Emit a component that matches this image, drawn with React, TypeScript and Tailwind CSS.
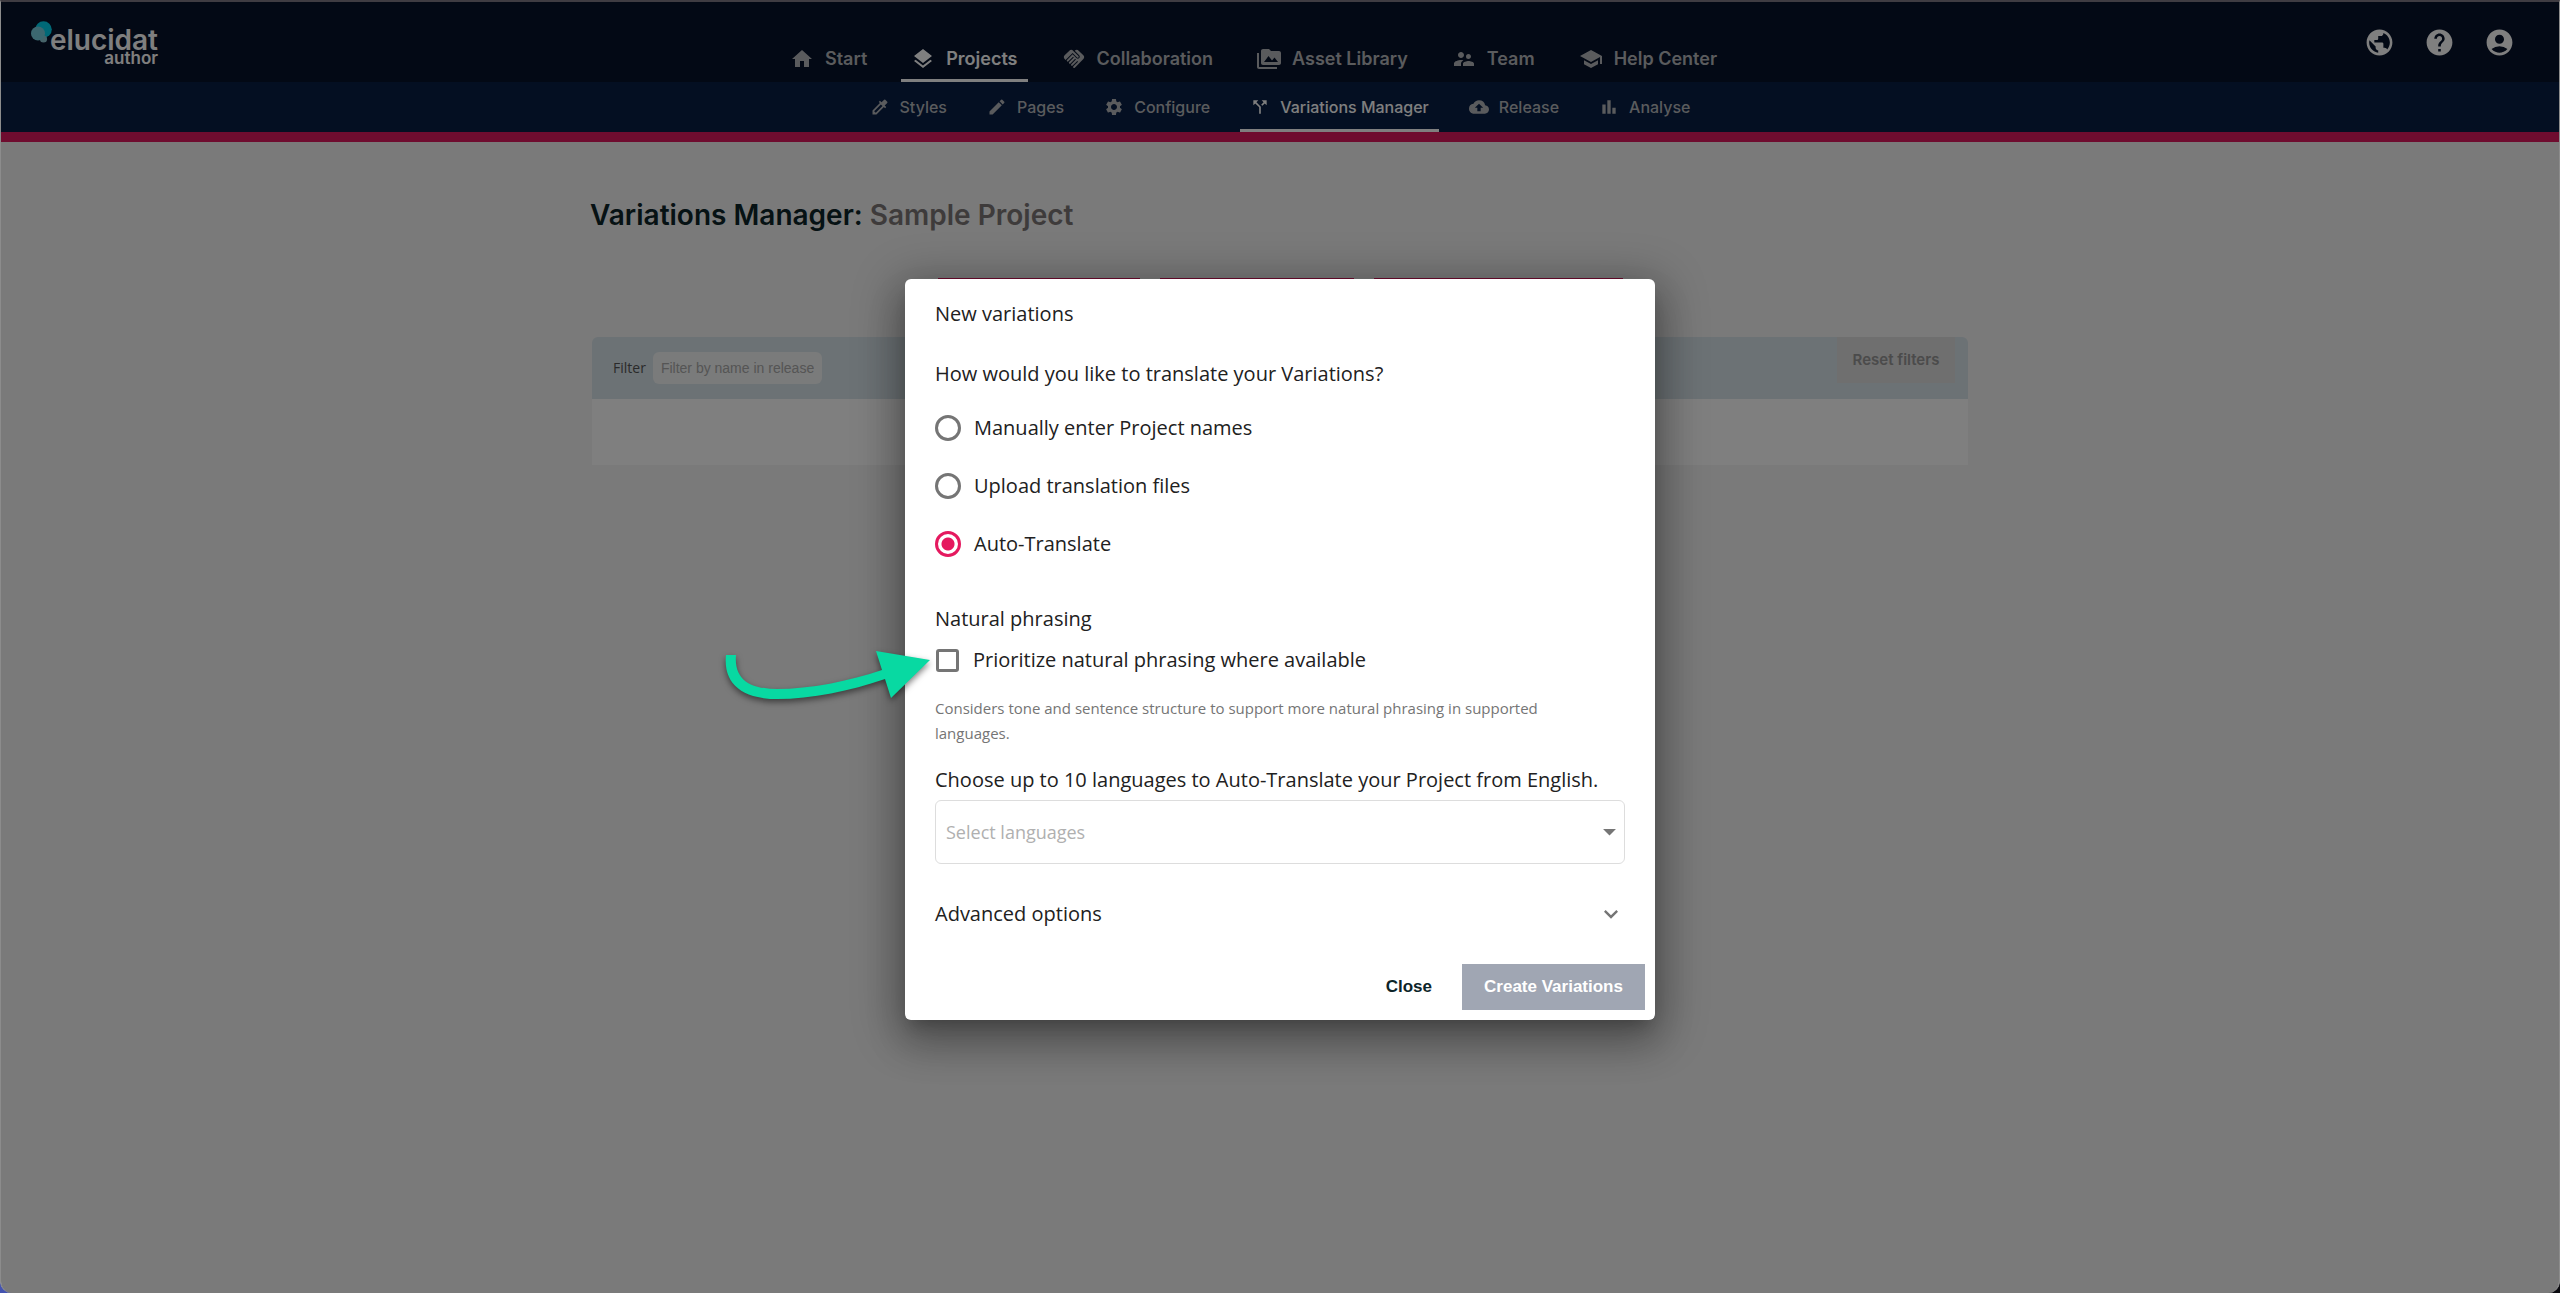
import React from 'react';
import {
    MdAccountCircle,
    MdArrowDropDown,
    MdBackup,
    MdBarChart,
    MdCallSplit,
    MdColorize,
    MdEdit,
    MdExpandMore,
    MdHandshake,
    MdHelp,
    MdHome,
    MdLayers,
    MdPermMedia,
    MdPublic,
    MdSchool,
    MdSettings,
    MdSupervisorAccount,
} from 'react-icons/md';
import type { IconType } from 'react-icons';

type NavItem = { label: string; icon: IconType; active?: boolean };

const mainNav: NavItem[] = [
    { label: 'Start', icon: MdHome },
    { label: 'Projects', icon: MdLayers, active: true },
    { label: 'Collaboration', icon: MdHandshake },
    { label: 'Asset Library', icon: MdPermMedia },
    { label: 'Team', icon: MdSupervisorAccount },
    { label: 'Help Center', icon: MdSchool },
];

const subNav: NavItem[] = [
    { label: 'Styles', icon: MdColorize },
    { label: 'Pages', icon: MdEdit },
    { label: 'Configure', icon: MdSettings },
    { label: 'Variations Manager', icon: MdCallSplit, active: true },
    { label: 'Release', icon: MdBackup },
    { label: 'Analyse', icon: MdBarChart },
];

const userLinks = [
    { label: 'Language', icon: MdPublic },
    { label: 'Help', icon: MdHelp },
    { label: 'Account', icon: MdAccountCircle },
];

const translateOptions = ['Manually enter Project names', 'Upload translation files', 'Auto-Translate'];

const Logo: React.FC = () => (
    <a href="#" className="relative flex w-[127px] flex-col items-end pt-2 font-semibold text-white">
        <svg className="absolute left-0 top-px h-6 w-6" viewBox="0 0 24 24" aria-hidden="true">
            <circle cx="12.5" cy="8.5" r="8.3" fill="#00d2ee" />
            <circle cx="12.5" cy="18" r="3.6" fill="#8cc6d2" />
            <circle cx="7" cy="12.5" r="7" fill="#78d0e0" />
        </svg>
        <span className="text-[28px] leading-6">elucidat</span>
        <span className="text-[17px] leading-[13px]">author</span>
    </a>
);

const Header: React.FC = () => (
    <header>
        <div className="flex h-20 items-center justify-between bg-[#06122a] px-[30px]">
            <Logo />
            <nav className="flex gap-6 self-end">
                {mainNav.map(({ label, icon: Icon, active }) => (
                    <a
                        key={label}
                        href="#"
                        className={`flex h-[43px] items-center gap-[11px] border-b-[3px] px-[10px] text-lg font-semibold ${active ? 'border-white text-white' : 'border-transparent text-[#b5b7bb]'}`}
                    >
                        <Icon className="size-6" />
                        {label}
                    </a>
                ))}
            </nav>
            <div className="flex text-white">
                {userLinks.map(({ label, icon: Icon }) => (
                    <button key={label} type="button" aria-label={label} className="flex w-[60px] justify-center">
                        <Icon className="size-[31px]" />
                    </button>
                ))}
            </div>
        </div>
        <nav className="flex h-[50px] justify-center gap-5 bg-[#081e44]">
            {subNav.map(({ label, icon: Icon, active }) => (
                <a
                    key={label}
                    href="#"
                    className={`flex items-center gap-[10px] border-b-[3px] px-[10px] pt-[2px] text-base font-medium ${active ? 'border-white text-white' : 'border-transparent text-[#b5b7bb]'}`}
                >
                    <Icon className="size-5" />
                    {label}
                </a>
            ))}
        </nav>
        <div className="h-[10px] bg-[#de185e]" />
    </header>
);

const Variations: React.FC = () => (
    <main className="mx-auto w-full max-w-[1380px] pt-14">
        <h1 className="text-[28px] leading-[34px] font-semibold text-[#0c2429]">
            Variations Manager: <span className="text-[#7c7777]">Sample Project</span>
        </h1>
        <div className="mt-[46px] flex justify-center gap-5">
            <div className="h-10 w-[202px] bg-[#de185e]" />
            <div className="h-10 w-[194px] bg-[#de185e]" />
            <div className="h-10 w-[249px] bg-[#de185e]" />
        </div>
        <section className="mx-[2px] mt-[19px]">
            <div className="flex h-[62px] items-start justify-between rounded-t-md bg-[#d8e4ea] pr-[13px] pl-[21px]">
                <div className="flex items-center gap-[7px] self-center">
                    <label htmlFor="filter" className="font-['Open_Sans',sans-serif] text-sm text-[#555]">Filter</label>
                    <input
                        id="filter"
                        type="text"
                        placeholder="Filter by name in release"
                        className="h-8 w-[169px] rounded-md bg-[#f4f6f6] px-2 font-['Liberation_Sans',sans-serif] text-sm placeholder:text-[#aaa]"
                    />
                </div>
                <button type="button" className="h-[46px] w-[118px] bg-[#dedede] text-[15px] font-semibold text-[#969696]">Reset filters</button>
            </div>
            <div className="h-[66px] bg-white" />
        </section>
    </main>
);

const Arrow: React.FC = () => (
    <svg
        className="pointer-events-none absolute top-[-16px] left-[-235px] h-[90px] w-[240px] drop-shadow-[0_3px_3px_rgba(0,0,0,0.5)]"
        viewBox="700 630 240 90"
        aria-hidden="true"
    >
        <path
            d="M726 655L736 655C734 678 748 689 777 689C810 689 850 681 882 670L876 651L930 660L891 698L885 679C850 691 812 699 777 699C741 699 723 683 726 655Z"
            fill="#08d9a2"
        />
    </svg>
);

const NewVariationsDialog: React.FC = () => (
    <div
        role="dialog"
        aria-labelledby="dialog-title"
        className="w-[750px] rounded-md bg-white font-['Open_Sans',sans-serif] text-xl leading-7 text-[#212121] shadow-[0_11px_15px_-7px_rgba(0,0,0,0.2),0_24px_38px_3px_rgba(0,0,0,0.14),0_9px_46px_8px_rgba(0,0,0,0.3)]"
    >
        <form className="flex flex-col px-[30px] pt-[21px]">
            <h2 id="dialog-title">New variations</h2>
            <fieldset className="mt-8">
                <legend>How would you like to translate your Variations?</legend>
                <div className="mt-[26px] flex flex-col gap-[30px]">
                    {translateOptions.map((option) => (
                        <label key={option} className="flex items-center gap-[13px]">
                            <input
                                type="radio"
                                name="translate"
                                defaultChecked={option === 'Auto-Translate'}
                                className="size-[26px] appearance-none rounded-full border-[3px] border-[#757575] checked:border-[#e5195f] checked:bg-[radial-gradient(#e5195f_6px,transparent_7px)]"
                            />
                            {option}
                        </label>
                    ))}
                </div>
            </fieldset>
            <h3 className="mt-[47px]">Natural phrasing</h3>
            <div className="relative mt-[13px]">
                <label className="flex items-center gap-[14px]">
                    <input type="checkbox" className="ml-px size-[23px] appearance-none rounded-[3px] border-[3px] border-[#757575] checked:bg-[#e5195f]" />
                    Prioritize natural phrasing where available
                </label>
                <Arrow />
            </div>
            <p className="mt-[22px] pr-12 text-[15px] leading-[25px] text-[#757575]">
                Considers tone and sentence structure to support more natural phrasing in supported languages.
            </p>
            <label htmlFor="languages" className="mt-5">Choose up to 10 languages to Auto-Translate your Project from English.</label>
            <div className="relative mt-[6px]">
                <select
                    id="languages"
                    defaultValue=""
                    className="h-16 w-full appearance-none rounded-md border border-[#ddd] px-[10px] text-lg text-[#b0b0b0]"
                >
                    <option value="">Select languages</option>
                </select>
                <MdArrowDropDown className="pointer-events-none absolute top-4 right-0 size-[31px] text-[#757575]" />
            </div>
            <button type="button" className="mt-[36px] flex items-center justify-between text-left">
                Advanced options
                <MdExpandMore className="size-[28px] text-[#757575]" />
            </button>
        </form>
        <div className="mt-[36px] flex justify-end gap-[10px] p-[10px] pt-0 font-['Liberation_Sans',sans-serif] text-[17px] font-bold">
            <button type="button" className="h-[46px] px-5 text-[#0c2429]">Close</button>
            <button type="button" className="h-[46px] w-[183px] bg-[#a0a6b3] text-white">Create Variations</button>
        </div>
    </div>
);

const App: React.FC = () => {
    return (
        <div className="bg-linear-to-r from-[#4453b0] to-[#0b0b10]">
            <div className="relative flex min-h-screen flex-col overflow-hidden rounded-b-xl border-x border-t-2 border-x-[#8c8c8c] border-t-[#3f3c42] bg-[#f4f4f4] font-['Inter',sans-serif]">
                <Header />
                <Variations />
                <div className="absolute inset-0 flex items-center justify-center bg-black/50 pt-1">
                    <NewVariationsDialog />
                </div>
            </div>
        </div>
    );
};

export default App;
